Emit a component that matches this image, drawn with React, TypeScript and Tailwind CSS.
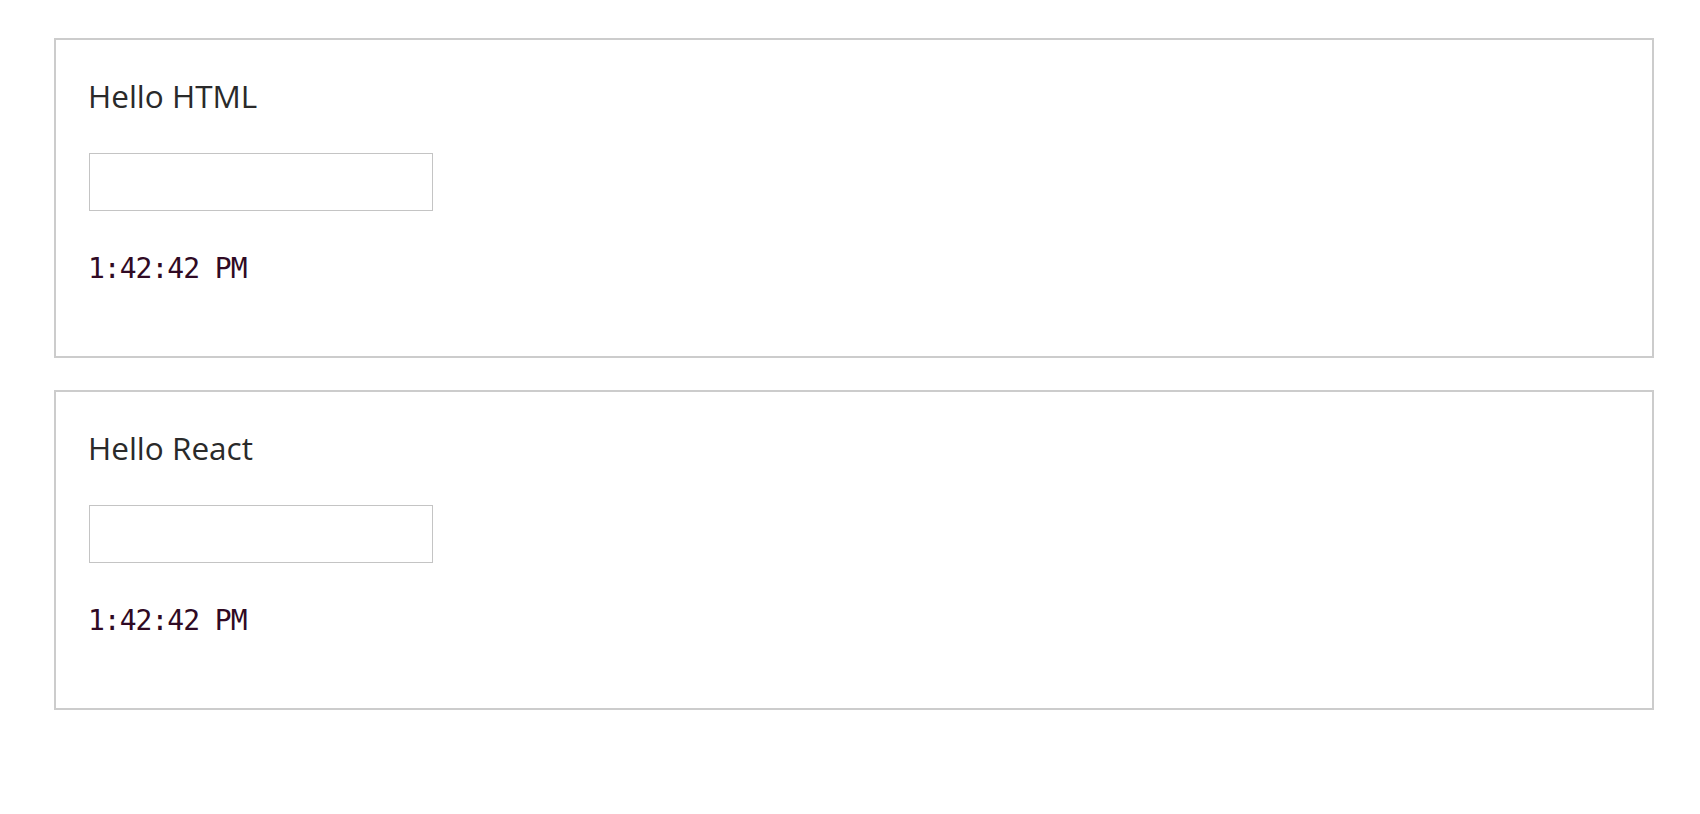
import React from "react";

function Card({ title }: { title: string }) {
  return (
    <div className="box-border h-[320px] w-[1600px] border-2 border-[#cccccc] bg-white pl-[33px] pt-[36px]">
      <h2
        className="m-0 ml-[-1px] text-[31.5px] leading-[40px] font-normal text-[#2a2a2a]"
        style={{ fontFamily: '"Open Sans", "Noto Sans", sans-serif' }}
      >
        {title}
      </h2>
      <input
        type="text"
        className="mt-[37px] box-border block h-[58px] w-[344px] border border-[#c4c4c4] bg-white outline-none"
      />
      <div
        className="mt-[42px] ml-[-1px] text-[28px] leading-[32px] tracking-[-1px] text-[#300a24]"
        style={{ fontFamily: '"DejaVu Sans Mono", "Liberation Mono", monospace' }}
      >
        1:42:42 PM
      </div>
    </div>
  );
}

export default function App() {
  return (
    <div className="min-h-[814px] w-[1700px] bg-white pl-[54px] pt-[38px]">
      <div className="flex flex-col gap-[32px]">
        <Card title="Hello HTML" />
        <Card title="Hello React" />
      </div>
    </div>
  );
}
